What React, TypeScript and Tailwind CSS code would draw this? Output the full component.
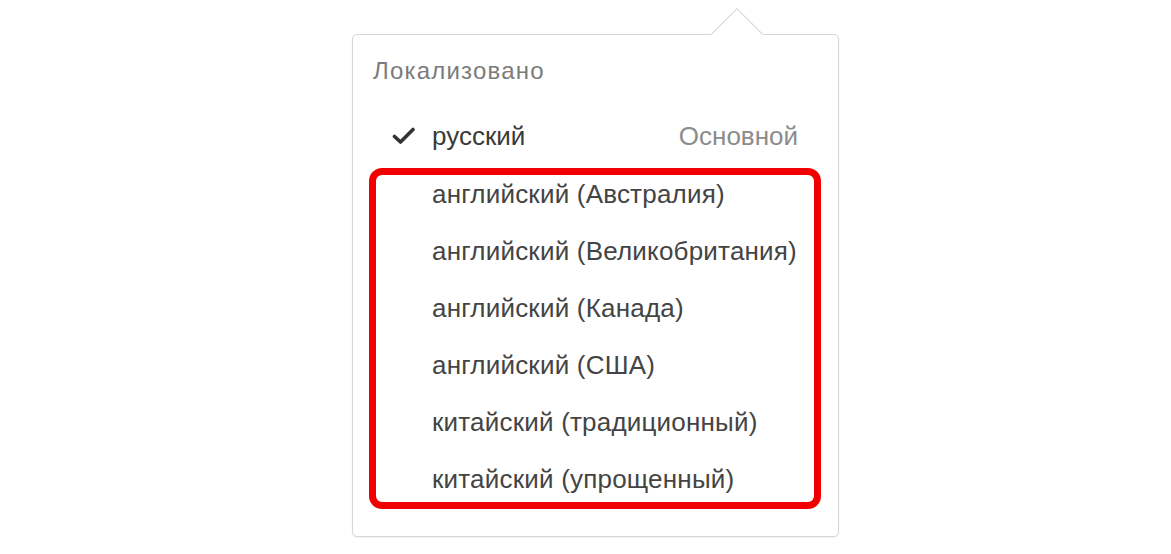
import React from "react";

const items = [
  "английский (Австралия)",
  "английский (Великобритания)",
  "английский (Канада)",
  "английский (США)",
  "китайский (традиционный)",
  "китайский (упрощенный)",
];

export default function App() {
  return (
    <div className="w-[1171px] h-[554px] bg-white pl-[352px] pt-[34px] font-['Liberation_Sans',Arial,sans-serif]">
      <div className="relative w-[487px] h-[503px] border border-[#d6d6d6] rounded-[5px] bg-white shadow-[0_1px_2px_rgba(0,0,0,0.05)]">
        {/* pointer */}
        <div className="absolute top-[-27px] left-[384px] w-[38px] h-[38px] rotate-45 origin-top-left border-l border-t border-[#d6d6d6] bg-white" />
        <div className="relative flex flex-col pl-[20px] pr-[40px] pt-[22px]">
          <div className="text-[24px] leading-[28px] tracking-[1.2px] text-[#7b7b7b]">Локализовано</div>
          <div className="flex items-center h-[56px] mt-[23px]">
            <svg width="24" height="18" viewBox="0 0 24 18" className="ml-[19px] mr-[16px]">
              <path d="M2.5 9.5 L8.5 15 L21 2.5" fill="none" stroke="#333" strokeWidth="3.6" strokeLinecap="round" strokeLinejoin="round" />
            </svg>
            <span className="text-[26px] text-[#3a3a3a]">русский</span>
            <span className="ml-auto text-[26px] text-[#8c8c8c]">Основной</span>
          </div>
          <div className="flex flex-col gap-[19px] ml-[-4px] mr-[-23px] mt-[4px] border-[7px] border-[#f20000] rounded-[13px] pl-[56px] pb-[4px]">
            {items.map((t) => (
              <div key={t} className="h-[38px] flex items-center text-[26px] tracking-[0.2px] text-[#444]">
                {t}
              </div>
            ))}
          </div>
        </div>
      </div>
    </div>
  );
}
